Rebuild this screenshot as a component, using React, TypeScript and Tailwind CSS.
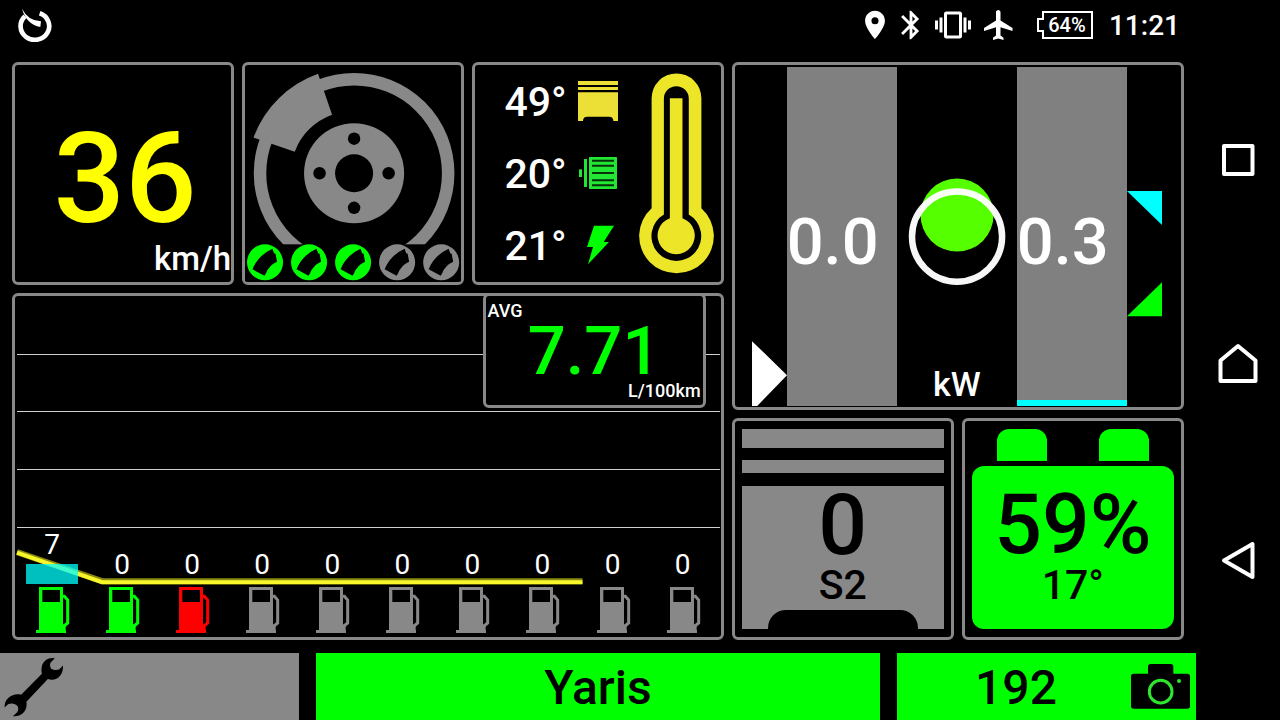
import type { ReactNode } from "react";
import { MdBluetooth, MdFlight, MdPlace, MdVibration } from "react-icons/md";

const BRAKES = [true, true, true, false, false];

const FUEL = [
  { value: 7, tone: "text-[#00ff00]" },
  { value: 0, tone: "text-[#00ff00]" },
  { value: 0, tone: "text-[#ff0000]" },
  ...Array.from({ length: 7 }, () => ({ value: 0, tone: "text-[#888888]" })),
];

function Panel({ className = "", children }: { className?: string; children: ReactNode }) {
  return (
    <section className={`min-w-0 rounded-md border-[3px] border-[#888888] ${className}`}>
      {children}
    </section>
  );
}

function GaugeIcon() {
  return (
    <svg viewBox="54 24 108 102" className="h-[34px] w-9" fill="none" aria-hidden="true">
      <path d="M119 40A43 41 0 1 1 75 49" stroke="white" strokeWidth="14" />
      <path d="M66 26Q84 62 123 64L121 81Q80 74 66 26Z" fill="white" />
    </svg>
  );
}

function StatusBar() {
  return (
    <header className="flex h-[50px] items-center justify-between pl-[18px] pr-4">
      <GaugeIcon />
      <div className="flex items-center">
        <MdPlace className="size-[34px]" />
        <MdBluetooth className="ml-[2px] size-[34px]" />
        <MdVibration className="ml-[7px] size-9" />
        <MdFlight className="ml-[10px] size-9" />
        <div className="relative ml-5 flex h-7 w-14 items-center justify-center pl-1">
          <svg viewBox="0 0 56 28" className="absolute inset-0 size-full" fill="none" aria-hidden="true">
            <path d="M6 1H55V27H6V20H1V8H6Z" stroke="white" strokeWidth="2" />
          </svg>
          <span className="text-[20px] font-medium leading-7">64%</span>
        </div>
        <time className="ml-4 pt-[2px] text-[28px] font-medium leading-8">11:21</time>
      </div>
    </header>
  );
}

function SpeedPanel() {
  return (
    <Panel className="flex flex-col">
      <div className="flex flex-1 items-end justify-center pl-1 text-[126px] font-medium leading-[120px] text-[#ffff00]">
        36
      </div>
      <div className="pb-[3px] text-right text-[33px] font-medium leading-[40px]">km/h</div>
    </Panel>
  );
}

function BrakePanel() {
  return (
    <Panel>
      <svg viewBox="-109 -108 216 216" className="size-full" aria-label="Brakes" role="img">
        <circle r="94" fill="none" stroke="#888888" strokeWidth="12.5" />
        <path d="M-100.5 -35.7A106.6 106.6 0 0 1 -36 -99.5L-22 -58.5A62.5 62.5 0 0 0 -59.3 -21.5Z" fill="#888888" />
        <circle r="50" fill="#888888" />
        <circle r="19" fill="black" />
        <circle cx="34.5" r="6.2" fill="black" />
        <circle cx="-34.5" r="6.2" fill="black" />
        <circle cy="34.5" r="6.2" fill="black" />
        <circle cy="-34.5" r="6.2" fill="black" />
        <rect x="-109" y="71" width="216" height="37" fill="black" />
        {BRAKES.map((on, i) => (
          <g key={i} transform={`translate(${-89 + i * 44} 89)`}>
            <circle r="18" fill={on ? "#00ff00" : "#888888"} />
            <path d="M7.5 -13.5L9 -9L10.5 -8.500L12 -.5Q4 3 1 11L-.5 13.500L-12.500 7Q-7 -7 7.5 -13.500Z" fill="black" />
          </g>
        ))}
      </svg>
    </Panel>
  );
}

function EngineIcon() {
  return (
    <svg viewBox="0 0 120 120" className="size-10" fill="#ecdf35" aria-hidden="true">
      <path d="M0 0H120V12H0ZM0 18H120V27H0ZM0 34H120V120H106Q106 107 93 107H28Q15 107 15 120H0Z" />
    </svg>
  );
}

function MotorIcon() {
  return (
    <svg viewBox="324 294 120 120" className="size-10" fill="#22e633" aria-hidden="true">
      <rect x="327" y="343" width="9" height="23" />
      <rect x="342" y="312" width="9" height="84" />
      <rect x="357" y="306" width="84" height="96" rx="2" />
      <path
        d="M366 317H432M366 332H432M366 354H432M366 376H432M366 391H432"
        stroke="#062f0a"
        strokeWidth="6"
      />
    </svg>
  );
}

function BoltIcon() {
  return (
    <svg viewBox="324 505 120 120" className="size-10" fill="#00ff00" aria-hidden="true">
      <path d="M372 507H432L401 556H417L354 623L369 571H351Z" />
    </svg>
  );
}

function TemperaturePanel() {
  const rows = [
    { value: "49°", icon: <EngineIcon /> },
    { value: "20°", icon: <MotorIcon /> },
    { value: "21°", icon: <BoltIcon /> },
  ];
  return (
    <Panel className="flex items-center justify-between pl-[29px] pr-[7px]">
      <ul className="flex h-full flex-col justify-around">
        {rows.map((row) => (
          <li key={row.value} className="flex items-center gap-[11px] text-[41px] font-medium leading-[68px]">
            <span className="pt-[2px]">{row.value}</span>
            {row.icon}
          </li>
        ))}
      </ul>
      <svg viewBox="507 54 226 603" className="h-[201px] w-[75px]" fill="#ede528" aria-hidden="true">
        <path d="M545 129a75 75 0 0 1 150 0V460A112.500 112.500 0 1 1 545 460Z" />
        <path d="M582 130a37.500 37.500 0 0 1 75 0V479A75 75 0 1 1 582 479Z" fill="black" />
        <path d="M600 129H638V490A56 56 0 1 1 600 490Z" />
      </svg>
    </Panel>
  );
}

function PumpIcon({ className }: { className: string }) {
  return (
    <svg viewBox="105 201 108 138" className={`h-[46px] w-9 ${className}`} aria-hidden="true">
      <path
        fill="currentColor"
        fillRule="evenodd"
        d="M120 201H192V316H200V330H201V339H111V330H120ZM130 210V246H183V210Z"
      />
      <path
        d="M190 229H196L206 240V309L196 317H190"
        fill="none"
        stroke="currentColor"
        strokeWidth="9"
      />
    </svg>
  );
}

function ConsumptionPanel() {
  return (
    <Panel className="relative grid grid-cols-10 items-end pb-1 pl-[2px] pr-[3px]">
      <svg
        viewBox="0 0 705 341"
        preserveAspectRatio="none"
        className="absolute inset-0 size-full"
        fill="none"
        aria-hidden="true"
      >
        <path
          d="M2 58.5H704M2 115.5H704M2 173.5H704M2 230.5H704"
          stroke="#d0d0d0"
          shapeRendering="crispEdges"
        />
        <path d="M2 255.500L87 284.500H567" stroke="#8a8a10" strokeWidth="6" />
        <path d="M2 256L87 285.500H567" stroke="#f6f62a" strokeWidth="4" />
      </svg>
      {FUEL.map((item, i) => (
        <div key={i} className="relative flex flex-col items-center">
          <span className="mb-[5px] text-[28px] leading-7">{item.value}</span>
          {item.value > 0 && (
            <div className="-mt-[5px] h-[25px] w-[52px] border-t-[5px] border-transparent bg-[#00ffff]/75 bg-clip-padding" />
          )}
          <PumpIcon className={`mt-[3px] ${item.tone}`} />
        </div>
      ))}
      <div className="absolute -top-[3px] right-[15px] flex h-[115px] w-[223px] flex-col rounded-md border-[3px] border-[#888888] bg-black px-[2px]">
        <span className="mt-[5px] h-5 text-[18px] font-medium leading-5">AVG</span>
        <span className="text-center text-[67px] font-medium leading-[60px] text-[#00ff00]">7.71</span>
        <span className="text-right text-[18px] font-medium leading-5">L/100km</span>
      </div>
    </Panel>
  );
}

function PowerPanel() {
  return (
    <Panel className="grid grid-cols-[52fr_110fr_120fr_110fr_54fr] pb-px pt-[2px] text-[65px] font-medium leading-[72px]">
      <svg viewBox="0 0 52 339" className="size-full" fill="white" aria-hidden="true">
        <path d="M17 274L52 308L22 339H17Z" />
      </svg>
      <div className="flex items-center bg-[#808080] pt-[10px]">0.0</div>
      <div className="relative flex items-end justify-center">
        <svg viewBox="0 0 120 339" className="absolute inset-0 size-full" fill="none" aria-hidden="true">
          <circle cx="60" cy="148" r="36.500" fill="#55ff00" />
          <circle cx="60" cy="169.500" r="45" stroke="white" strokeOpacity=".97" strokeWidth="6.500" />
        </svg>
        <span className="relative pb-[2px] text-[34px] leading-10">kW</span>
      </div>
      <div className="flex flex-col bg-[#808080]">
        <div className="flex flex-1 items-center pt-4">0.3</div>
        <div className="h-[6px] bg-[#00ffff]" />
      </div>
      <svg viewBox="0 0 54 339" className="size-full" aria-hidden="true">
        <path d="M0 124H35V158Z" fill="#00ffff" />
        <path d="M0 249H35V215Z" fill="#00ff00" />
      </svg>
    </Panel>
  );
}

function EnginePanel() {
  return (
    <Panel className="flex flex-col px-[7px] py-2">
      <div className="h-[19px] bg-[#888888]" />
      <div className="mt-3 h-[13px] bg-[#888888]" />
      <div className="mt-[13px] flex flex-1 flex-col items-center bg-[#888888] pt-px font-medium text-black">
        <span className="text-[86px] leading-[76px]">0</span>
        <span className="text-[41px] leading-[44px]">S2</span>
        <div className="mt-auto h-[19px] w-[150px] rounded-t-[18px] bg-black" />
      </div>
    </Panel>
  );
}

function BatteryPanel() {
  return (
    <Panel className="flex flex-col px-[7px] py-2">
      <div className="flex justify-between px-[25px]">
        <div className="h-8 w-[50px] rounded-t-xl bg-[#00ff00]" />
        <div className="h-8 w-[50px] rounded-t-xl bg-[#00ff00]" />
      </div>
      <div className="mt-[5px] flex flex-1 flex-col items-center rounded-xl bg-[#00ff00] pt-[21px] font-medium text-black">
        <span className="text-[84px] leading-[76px]">59%</span>
        <span className="text-[41px] leading-[44px]">17°</span>
      </div>
    </Panel>
  );
}

function WrenchIcon() {
  return (
    <svg viewBox="10 408 182 181" className="size-[60px]" fill="currentColor" aria-hidden="true">
      <path d="M164 411C138 407 118 427 125 458L62 522C36 516 10 534 12 561L23 550Q38 545 49 554Q57 563 50 575L37 587C59 590 83 574 78 543L143 474C169 483 191 463 189 433L178 445Q166 450 154 444Q147 436 151 425Z" />
    </svg>
  );
}

function CameraIcon() {
  return (
    <svg viewBox="528 762 177 135" className="h-[45px] w-[59px]" aria-hidden="true">
      <path
        d="M528 799Q528 791 536 791H579V770Q579 762 587 762H647Q655 762 655 770V791H697Q705 791 705 799V888Q705 896 697 896H536Q528 896 528 888Z"
        fill="black"
      />
      <circle cx="617" cy="845" r="34" fill="none" stroke="#2fe62f" strokeWidth="9" />
      <circle cx="672" cy="813" r="6" fill="#2fe62f" />
    </svg>
  );
}

function Footer() {
  return (
    <footer className="grid h-[67px] grid-cols-[299fr_564fr_299fr] gap-[17px] text-5xl font-medium text-black">
      <button type="button" aria-label="Settings" className="flex items-center bg-[#888888] pl-1">
        <WrenchIcon />
      </button>
      <button type="button" className="bg-[#00ff00] pt-[2px]">
        Yaris
      </button>
      <button type="button" className="flex items-center justify-between bg-[#00ff00] pl-1 pr-[6px]">
        <span className="flex-1 pt-[2px]">192</span>
        <CameraIcon />
      </button>
    </footer>
  );
}

function SystemNav() {
  const button = "flex h-16 w-full items-center justify-center";
  return (
    <nav className="flex w-[84px] shrink-0 flex-col justify-between py-32">
      <button type="button" aria-label="Recent apps" className={button}>
        <svg viewBox="0 0 34 34" className="size-[34px]" fill="none" stroke="white" strokeWidth="4" strokeLinejoin="round">
          <path d="M3 3H31.500V31H3Z" />
        </svg>
      </button>
      <button type="button" aria-label="Home" className={button}>
        <svg viewBox="0 0 40 48" className="h-12 w-10" fill="none" stroke="white" strokeWidth="4" strokeLinejoin="round">
          <path d="M20 10L37.500 24.500V45H2.500V24.500Z" />
        </svg>
      </button>
      <button type="button" aria-label="Back" className={button}>
        <svg viewBox="0 0 34 38" className="h-[38px] w-[34px]" fill="none" stroke="white" strokeWidth="4" strokeLinejoin="round">
          <path d="M3 19.500L31.500 3V36Z" />
        </svg>
      </button>
    </nav>
  );
}

export default function App() {
  return (
    <div className="flex min-h-screen bg-black font-['Roboto',sans-serif] text-white">
      <div className="flex min-w-0 flex-1 flex-col">
        <StatusBar />
        <main className="mb-[13px] mt-3 grid flex-1 grid-cols-[711fr_452fr] gap-2 px-3">
          <div className="grid grid-rows-[222fr_347fr] gap-2">
            <div className="grid grid-cols-[222fr_222fr_251fr] gap-2">
              <SpeedPanel />
              <BrakePanel />
              <TemperaturePanel />
            </div>
            <ConsumptionPanel />
          </div>
          <div className="grid grid-rows-[348fr_222fr] gap-2">
            <PowerPanel />
            <div className="grid grid-cols-2 gap-2">
              <EnginePanel />
              <BatteryPanel />
            </div>
          </div>
        </main>
        <Footer />
      </div>
      <SystemNav />
    </div>
  );
}
